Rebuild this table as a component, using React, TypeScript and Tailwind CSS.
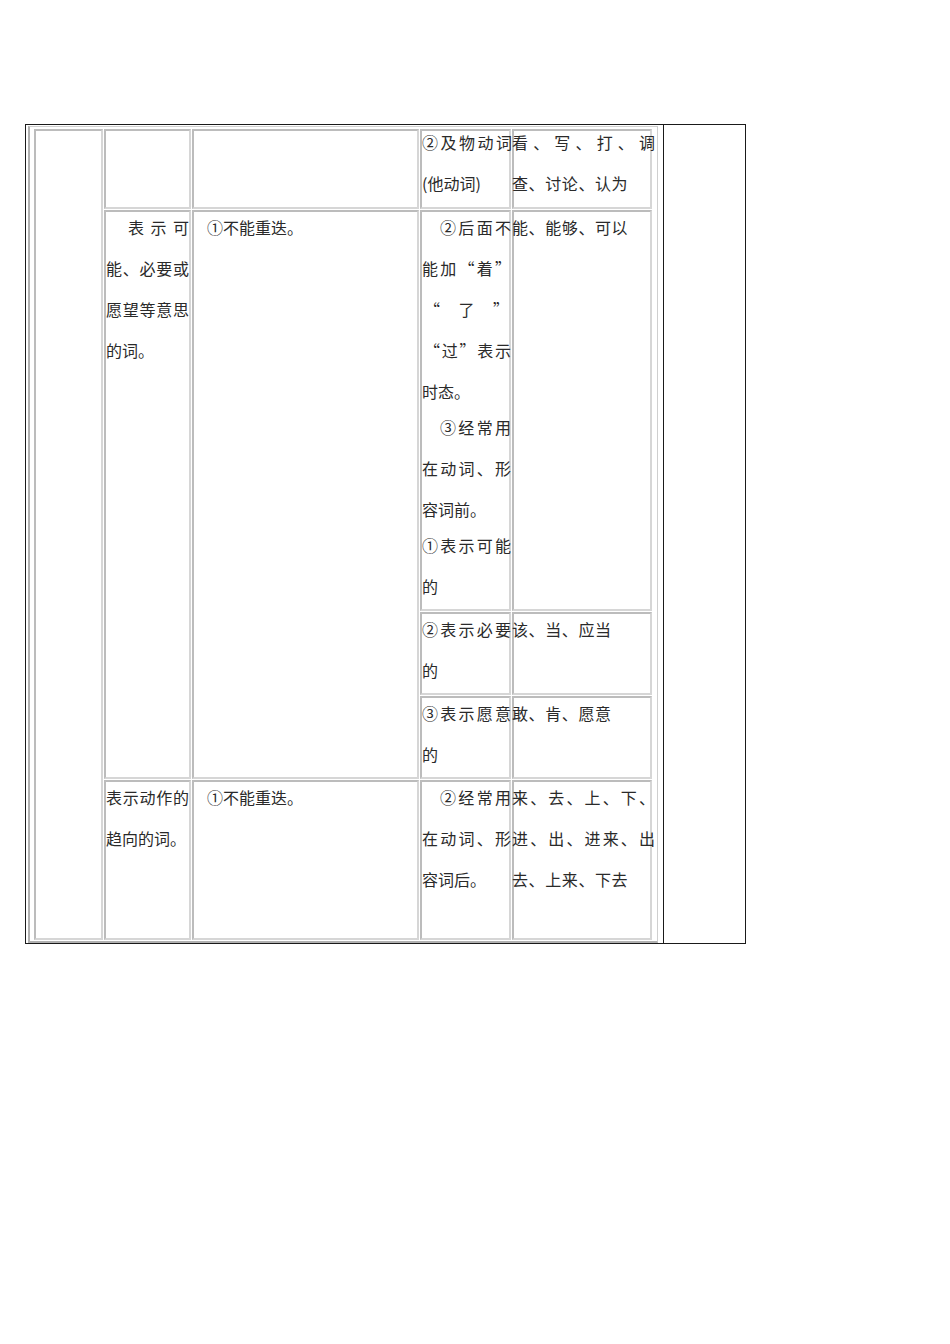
import React from "react"

// one justified line: characters spread across the cell width
function J({ t, className = "" }: { t: string; className?: string }) {
  return (
    <div className={`flex h-[41px] justify-between leading-[30px] whitespace-nowrap ${className}`}>
      {Array.from(t).map((c, i) => (
        <span key={i}>{c}</span>
      ))}
    </div>
  )
}

// plain line, left aligned; short lines close a paragraph with less room below
function L({ t, short = false, className = "" }: { t: string; short?: boolean; className?: string }) {
  return (
    <div className={`${short ? "h-[36px]" : "h-[41px]"} leading-[30px] whitespace-nowrap ${className}`}>{t}</div>
  )
}

const cell =
  "border-2 border-t-[#bcbcbc] border-l-[#bcbcbc] border-r-[#d6d6d6] border-b-[#d6d6d6] bg-white overflow-visible"

export default function App() {
  return (
    <div
      className="min-h-[1344px] bg-white pt-[124px] pl-[25px] text-[16px] text-[#2a2a2a]"
      style={{ fontFamily: "'Noto Sans CJK SC', 'Noto Sans', sans-serif" }}
    >
      <div className="flex w-[721px] border border-[#1a1a1a]">
        <div className="w-[637px] pt-[1px] pl-[2px]">
          <div className="w-[630px] border border-l-2 border-b-2 border-[#b0b0b0] border-t-[#cfcfcf] border-r-[#cfcfcf] px-[4px] pt-[2px] pb-[1px]">
            <div className="grid grid-cols-[69px_87px_227px_91px_140px] grid-rows-[80px_401px_83px_83px_160px] gap-[1px]">
              {/* first column, empty through every row */}
              <div className={`${cell} row-span-5`} />

              {/* row A */}
              <div className={cell} />
              <div className={cell} />
              <div className={cell}>
                <div className="-mt-[4px]">
                  <J t="②及物动词" className="w-[90px]" />
                  <L t="(他动词)" />
                </div>
              </div>
              <div className={cell}>
                <div className="-mt-[4px] -ml-[2px]">
                  <J t="看、写、打、调" className="w-[143px]" />
                  <L t="查、讨论、认为" className="tracking-[0.6px]" />
                </div>
              </div>

              {/* row B */}
              <div className={`${cell} row-span-3`}>
                <J t="表示可" className="pl-[22px]" />
                <J t="能、必要或" />
                <J t="愿望等意思" />
                <L t="的词。" />
              </div>
              <div className={`${cell} row-span-3`}>
                <L t="①不能重迭。" className="pl-[13px]" />
              </div>
              <div className={cell}>
                <J t="②后面不" className="pl-[18px] w-[89px]" />
                <J t="能加“着”" className="w-[89px]" />
                <J t="“了”" className="px-[2px] w-[89px]" />
                <J t="“过”表示" className="pl-[2px] w-[89px]" />
                <L t="时态。" short />
                <J t="③经常用" className="pl-[18px] w-[89px]" />
                <J t="在动词、形" className="w-[89px]" />
                <L t="容词前。" short />
                <J t="①表示可能" className="w-[89px]" />
                <L t="的" />
              </div>
              <div className={cell}>
                <L t="能、能够、可以" className="-ml-[2px] tracking-[0.6px]" />
              </div>
              <div className={cell}>
                <J t="②表示必要" className="w-[89px]" />
                <L t="的" />
              </div>
              <div className={cell}>
                <L t="该、当、应当" className="-ml-[2px] tracking-[0.6px]" />
              </div>
              <div className={cell}>
                <J t="③表示愿意" className="w-[89px]" />
                <L t="的" />
              </div>
              <div className={cell}>
                <L t="敢、肯、愿意" className="-ml-[2px] tracking-[0.6px]" />
              </div>

              {/* row C */}
              <div className={cell}>
                <J t="表示动作的" />
                <L t="趋向的词。" />
              </div>
              <div className={cell}>
                <L t="①不能重迭。" className="pl-[13px]" />
              </div>
              <div className={cell}>
                <J t="②经常用" className="pl-[18px] w-[89px]" />
                <J t="在动词、形" className="w-[89px]" />
                <L t="容词后。" />
              </div>
              <div className={cell}>
                <div className="-ml-[2px]">
                  <J t="来、去、上、下、" className="w-[143px]" />
                  <J t="进、出、进来、出" className="w-[143px]" />
                  <L t="去、上来、下去" className="tracking-[0.6px]" />
                </div>
              </div>
            </div>
          </div>
        </div>
        <div className="flex-1 border-l border-[#1a1a1a]" />
      </div>
    </div>
  )
}
